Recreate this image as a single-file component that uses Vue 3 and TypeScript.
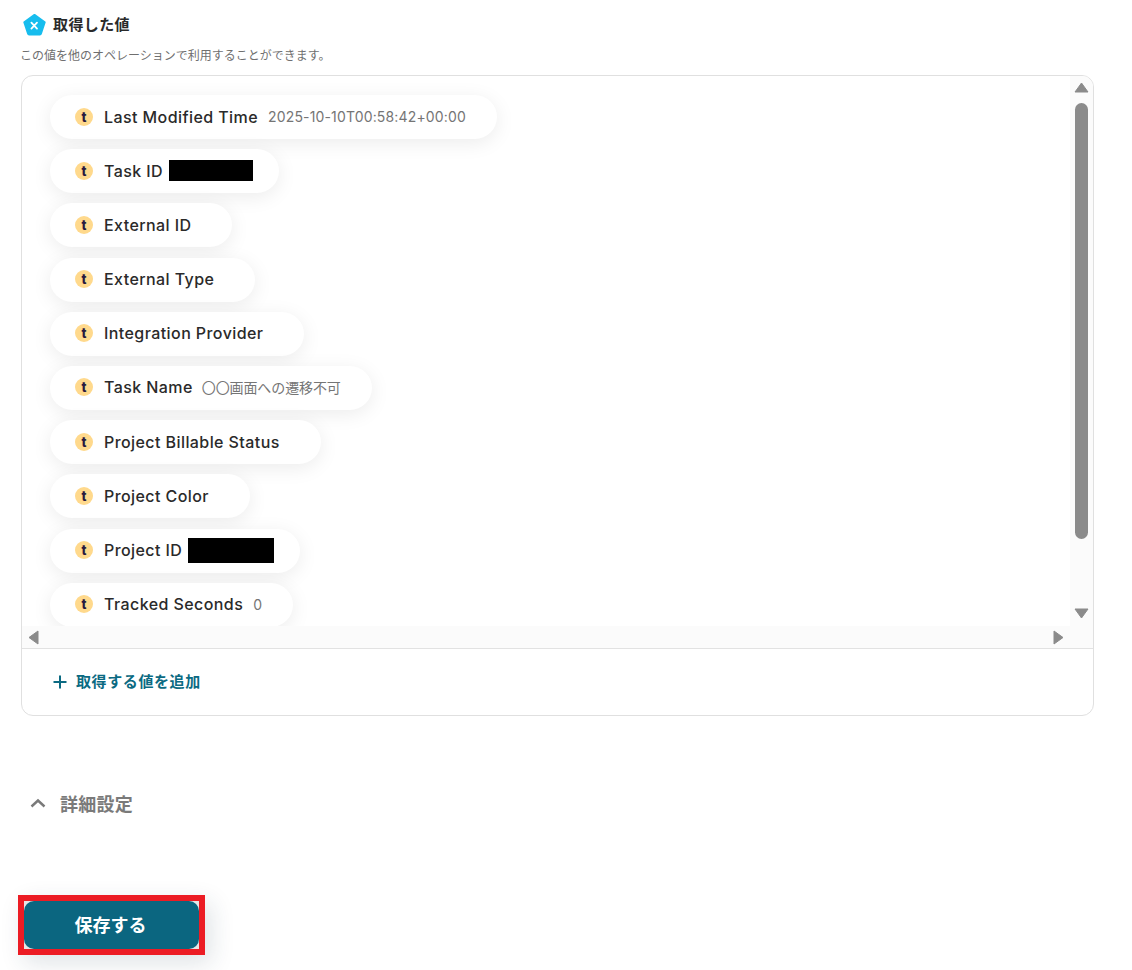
<script setup lang="ts">
interface Row { label: string; value?: string; mask?: number; maskH?: number; small?: boolean }
const rows: Row[] = [
  { label: 'Last Modified Time', value: '2025-10-10T00:58:42+00:00' },
  { label: 'Task ID', mask: 84, maskH: 21 },
  { label: 'External ID' },
  { label: 'External Type' },
  { label: 'Integration Provider' },
  { label: 'Task Name', value: '〇〇画面への遷移不可', small: true },
  { label: 'Project Billable Status' },
  { label: 'Project Color' },
  { label: 'Project ID', mask: 86, maskH: 25 },
  { label: 'Tracked Seconds', value: '0' }
]
</script>

<template>
  <div class="page">
    <div class="head">
      <svg class="penta" width="24" height="24" viewBox="0 0 24 24">
        <path d="M11.5 1.8 21.8 9.2 18 20.8a1.2 1.2 0 0 1-1.1.8H6.1a1.2 1.2 0 0 1-1.1-.8L1.2 9.2Z" fill="#17bdee" stroke="#17bdee" stroke-width="1.8" stroke-linejoin="round" />
        <path d="M8.4 9.6 14 15.6M14 9.6 8.4 15.6" stroke="#fff" stroke-width="1.8" stroke-linecap="round" />
      </svg>
      <span class="title">取得した値</span>
    </div>
    <p class="sub">この値を他のオペレーションで利用することができます。</p>

    <div class="card">
      <div class="scroll">
        <div class="view">
          <div v-for="r in rows" :key="r.label" class="pill" :class="{ masked: r.mask, plain: !r.mask && !r.value }">
            <span class="tk">t</span>
            <span class="lbl">{{ r.label }}</span>
            <span v-if="r.value" class="val" :class="{ small: r.small }">{{ r.value }}</span>
            <span v-if="r.mask" class="mask" :style="{ width: r.mask + 'px', height: r.maskH + 'px' }"></span>
          </div>
        </div>
        <div class="vbar">
          <svg width="15" height="11" viewBox="0 0 15 11"><path d="M7.5 1 14 10H1Z" fill="#8b8b8b" stroke="#8b8b8b" stroke-linejoin="round" /></svg>
          <div class="thumb"></div>
          <svg width="15" height="11" viewBox="0 0 15 11"><path d="M7.5 10 14 1H1Z" fill="#8b8b8b" stroke="#8b8b8b" stroke-linejoin="round" /></svg>
        </div>
        <div class="hbar">
          <svg width="11" height="15" viewBox="0 0 11 15"><path d="M1 7.5 10 1V14Z" fill="#8b8b8b" stroke="#8b8b8b" stroke-linejoin="round" /></svg>
          <svg width="11" height="15" viewBox="0 0 11 15"><path d="M10 7.5 1 1V14Z" fill="#8b8b8b" stroke="#8b8b8b" stroke-linejoin="round" /></svg>
        </div>
      </div>
      <div class="add">
        <svg width="16" height="16" viewBox="0 0 16 16"><path d="M8 1.5v13M1.5 8h13" stroke="#0b6a82" stroke-width="2" /></svg>
        <span>取得する値を追加</span>
      </div>
    </div>

    <div class="detail">
      <svg width="18" height="12" viewBox="0 0 18 12"><path d="M2.5 9.5 9 3.5l6.5 6" fill="none" stroke="#7a7a7a" stroke-width="2.4" /></svg>
      <span>詳細設定</span>
    </div>

    <div class="mark">
      <button class="save" type="button">保存する</button>
    </div>
  </div>
</template>

<style scoped>
.page {
  height: 970px;
  overflow: hidden;
  box-sizing: border-box;
  padding: 13px 0 0 21px;
  background: #fff;
  font-family: Inter, "Noto Sans CJK JP", sans-serif;
  color: #2a2a2a;
}
.head {
  display: flex;
  align-items: center;
  gap: 6px;
  height: 24px;
  margin-left: 2px;
}
.penta { flex: none; }
.title {
  font-size: 15px;
  font-weight: 700;
  line-height: 24px;
  letter-spacing: 0.4px;
}
.sub {
  margin: 10px 0 0 -1px;
  font-size: 12px;
  line-height: 18px;
  color: #6f6f6f;
}
.card {
  width: 1073px;
  height: 641px;
  margin-top: 10px;
  box-sizing: border-box;
  border: 1px solid #e0e0e0;
  border-radius: 12px;
  overflow: hidden;
}
.scroll {
  display: grid;
  grid-template-columns: 1048px 23px;
  grid-template-rows: 550px 22px;
  border-bottom: 1px solid #e2e2e2;
}
.view {
  overflow: hidden;
  padding: 19px 0 0 28px;
  display: flex;
  flex-direction: column;
  align-items: flex-start;
  gap: 10.2px;
}
.pill {
  flex: none;
  display: flex;
  align-items: center;
  height: 44px;
  box-sizing: border-box;
  padding: 0 31px 1px 25px;
  border-radius: 22px;
  background: #fff;
  box-shadow: 0 4px 20px rgba(0, 0, 0, 0.08);
}
.pill.plain { padding-right: 41px; }
.pill.masked { padding-right: 26px; }
.tk {
  flex: none;
  width: 18px;
  height: 18px;
  border-radius: 50%;
  background: #ffd98c;
  color: #2a1a3f;
  font-size: 13px;
  font-weight: 800;
  line-height: 18px;
  text-align: center;
}
.lbl {
  margin-left: 11px;
  font-size: 16px;
  font-weight: 550;
  letter-spacing: 0.42px;
  white-space: nowrap;
}
.val {
  margin-left: 10px;
  font-size: 14px;
  letter-spacing: 0.16px;
  color: #757575;
  white-space: nowrap;
}
.val.small {
  margin-left: 9px;
  letter-spacing: -0.1px;
}
.mask {
  margin-left: 6px;
  background: #000;
}
.vbar {
  grid-row: 1;
  grid-column: 2;
  background: #fbfbfb;
  display: flex;
  flex-direction: column;
  align-items: center;
  justify-content: space-between;
  padding: 6px 0 7px;
  box-sizing: border-box;
}
.vbar svg { flex: none; }
.thumb {
  flex: none;
  width: 13px;
  height: 436px;
  margin: 10px 0 auto;
  border-radius: 7px;
  background: #8b8b8b;
}
.hbar {
  grid-row: 2;
  grid-column: 1 / 3;
  background: #fbfbfb;
  display: flex;
  justify-content: space-between;
  align-items: center;
  padding: 0 29px 0 6px;
}
.add {
  display: flex;
  align-items: center;
  gap: 8px;
  padding: 23px 0 0 30px;
  color: #0b6a82;
  font-size: 15px;
  font-weight: 600;
  letter-spacing: 0.6px;
  line-height: 20px;
}
.detail {
  display: flex;
  align-items: center;
  gap: 13px;
  margin: 75px 0 0 8px;
  height: 24px;
  font-size: 18px;
  font-weight: 700;
  letter-spacing: 0.25px;
  color: #7a7a7a;
}
.mark {
  width: 187px;
  height: 60px;
  margin: 80px 0 0 -3px;
  box-sizing: border-box;
  border: 6px solid #ec1c24;
  background: #e6e6e6;
  box-shadow: 6px 8px 24px rgba(30, 60, 80, 0.14);
}
.save {
  display: block;
  width: 100%;
  height: 100%;
  border: 0;
  padding: 0 2px 2px 0;
  border-radius: 10px;
  background: #0b6680;
  color: #fff;
  font-family: inherit;
  font-size: 18px;
  font-weight: 700;
}
</style>
